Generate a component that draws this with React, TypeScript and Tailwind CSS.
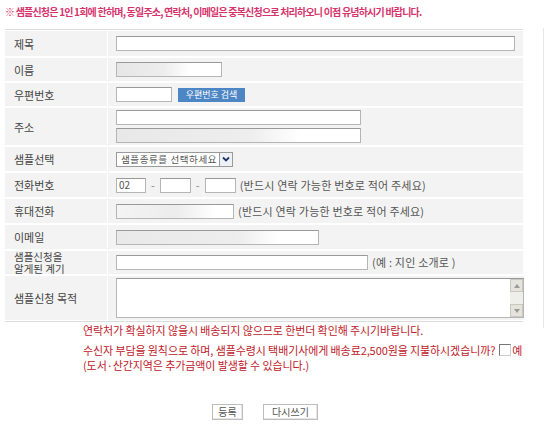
import type { ReactNode } from 'react';

const font = { fontFamily: '"Noto Sans CJK KR", "Noto Sans", sans-serif' };

function Row({ label, h, children }: { label: ReactNode; h: string; children?: ReactNode }) {
  return (
    <div className={`flex gap-px ${h}`}>
      <div className="flex w-[102px] shrink-0 items-center bg-[#f3f3f3] pl-[9px] text-[11px] leading-[12px] text-[#444]">
        {label}
      </div>
      <div className="flex flex-1 items-center bg-[#f3f3f3] pl-[8px] text-[11px] text-[#555]">{children}</div>
    </div>
  );
}

const box = 'h-[15px] border border-[#b5b5b5] border-t-[#999] bg-white';
const blur = 'bg-[linear-gradient(90deg,#e6e6e6_0%,#ededed_45%,#fff_70%)]';

export default function App() {
  return (
    <div className="relative h-[429px] w-[550px] overflow-hidden bg-white" style={font}>
      <div className="absolute right-[6px] top-[28px] h-[300px] w-px bg-[#e8e8e8]" />
      <p className="pl-[5px] pt-[5px] text-[10px] font-bold leading-[14px] tracking-[-0.8px] text-[#d6336c]">
        ※ 샘플신청은 1인 1회에 한하며, 동일주소, 연락처, 이메일은 중복신청으로 처리하오니 이점 유념하시기 바랍니다.
      </p>

      <div className="ml-[5px] mt-[10px] w-[518px] border-y border-[#dcdcdc]">
        <div className="flex flex-col gap-[2px] py-px">
          <Row label="제목" h="h-[25px]">
            <div className={`${box} w-[399px]`} />
          </Row>
          <Row label="이름" h="h-[23px]">
            <div className={`${box} ${blur} w-[106px]`} />
          </Row>
          <Row label="우편번호" h="h-[23px]">
            <div className={`${box} w-[56px] bg-[#eaeaea]`} />
            <button className="ml-[6px] h-[14px] w-[67px] bg-[#4d86c4] text-[9px] leading-[14px] text-white">
              우편번호 검색
            </button>
          </Row>
          <Row label="주소" h="h-[37px]">
            <div className="flex flex-col gap-[3px]">
              <div className={`${box} w-[245px] bg-[#ececec]`} />
              <div className={`${box} w-[245px] bg-[linear-gradient(90deg,#e8e8e8_0%,#eeeeee_55%,#fff_75%)]`} />
            </div>
          </Row>
          <Row label="샘플선택" h="h-[24px]">
            <div className="flex h-[15px] w-[117px] items-center border border-[#9a9a9a] bg-white">
              <span className="flex-1 whitespace-nowrap pl-[4px] text-[9.5px] leading-[13px] tracking-[0.6px] text-[#555]">
                샘플종류를 선택하세요
              </span>
              <span className="flex h-[13px] w-[13px] shrink-0 items-center justify-center border-l border-[#9a9a9a] bg-[#eef2f7]">
                <svg width="8" height="6" viewBox="0 0 8 6">
                  <path d="M1 1.5 L4 4.5 L7 1.5" fill="none" stroke="#22346b" strokeWidth="1.8" />
                </svg>
              </span>
            </div>
          </Row>
          <Row label="전화번호" h="h-[24px]">
            <div className={`${box} w-[30px] pl-[2px] text-[10px] leading-[12px] text-[#555]`}>02</div>
            <span className="mx-[5px] text-[#888]">-</span>
            <div className={`${box} w-[31px]`} />
            <span className="mx-[5px] text-[#888]">-</span>
            <div className={`${box} w-[31px]`} />
            <span className="ml-[4px] tracking-[0.2px]">(반드시 연락 가능한 번호로 적어 주세요)</span>
          </Row>
          <Row label="휴대전화" h="h-[24px]">
            <div className={`${box} w-[118px] bg-[linear-gradient(90deg,#f4f4f4_0%,#ececec_50%,#fff_85%)]`} />
            <span className="ml-[4px] tracking-[0.2px]">(반드시 연락 가능한 번호로 적어 주세요)</span>
          </Row>
          <Row label="이메일" h="h-[24px]">
            <div className={`${box} w-[203px] bg-[linear-gradient(90deg,#e9e9e9_0%,#ededed_60%,#fff_80%)]`} />
          </Row>
          <Row
            label={
              <span className="text-[10.5px] leading-[12px]">
                샘플신청을
                <br />
                알게된 계기
              </span>
            }
            h="h-[23px]"
          >
            <div className={`${box} w-[252px]`} />
            <span className="ml-[4px] tracking-[0.2px]">(예 : 지인 소개로 )</span>
          </Row>
          <Row label="샘플신청 목적" h="h-[44px]">
            <div className="flex h-[40px] w-[408px] border border-[#b5b5b5] border-t-[#999] bg-white">
              <div className="flex-1" />
              <div className="flex w-[13px] flex-col justify-between bg-[#eeeeea]">
                <div className="flex h-[13px] items-center justify-center border border-[#c9c9c0] bg-[#e4e4dc]">
                  <svg width="6" height="4" viewBox="0 0 6 4">
                    <path d="M0 4 L3 0 L6 4 Z" fill="#9a9a9a" />
                  </svg>
                </div>
                <div className="flex h-[13px] items-center justify-center border border-[#c9c9c0] bg-[#e4e4dc]">
                  <svg width="6" height="4" viewBox="0 0 6 4">
                    <path d="M0 0 L3 4 L6 0 Z" fill="#9a9a9a" />
                  </svg>
                </div>
              </div>
            </div>
          </Row>
        </div>
      </div>

      <div className="mt-px pl-[83px] text-[11px] leading-[14px] tracking-[-0.1px] text-[#c0202a]">
        <p>연락처가 확실하지 않을시 배송되지 않으므로 한번더 확인해 주시기바랍니다.</p>
        <p className="mt-[6px] flex h-[14px] items-center">
          수신자 부담을 원칙으로 하며, 샘플수령시 택배기사에게 배송료2,500원을 지불하시겠습니까?
          <span className="ml-[4px] inline-block h-[12px] w-[12px] border border-[#777] border-r-[#ccc] border-b-[#ccc] bg-white" />
          <span className="ml-[1px]">예</span>
        </p>
        <p className="mt-px">(도서·산간지역은 추가금액이 발생할 수 있습니다.)</p>
      </div>

      <div className="mt-[32px] flex justify-center gap-[20px] pr-[20px]">
        <button className="h-[16px] w-[31px] border border-[#bdbdbd] bg-white text-[10px] leading-[14px] text-[#555] shadow-[inset_-1px_-1px_0_#e5e5e5]">
          등록
        </button>
        <button className="h-[16px] w-[55px] border border-[#bdbdbd] bg-white text-[10px] leading-[14px] text-[#555] shadow-[inset_-1px_-1px_0_#e5e5e5]">
          다시쓰기
        </button>
      </div>
    </div>
  );
}
